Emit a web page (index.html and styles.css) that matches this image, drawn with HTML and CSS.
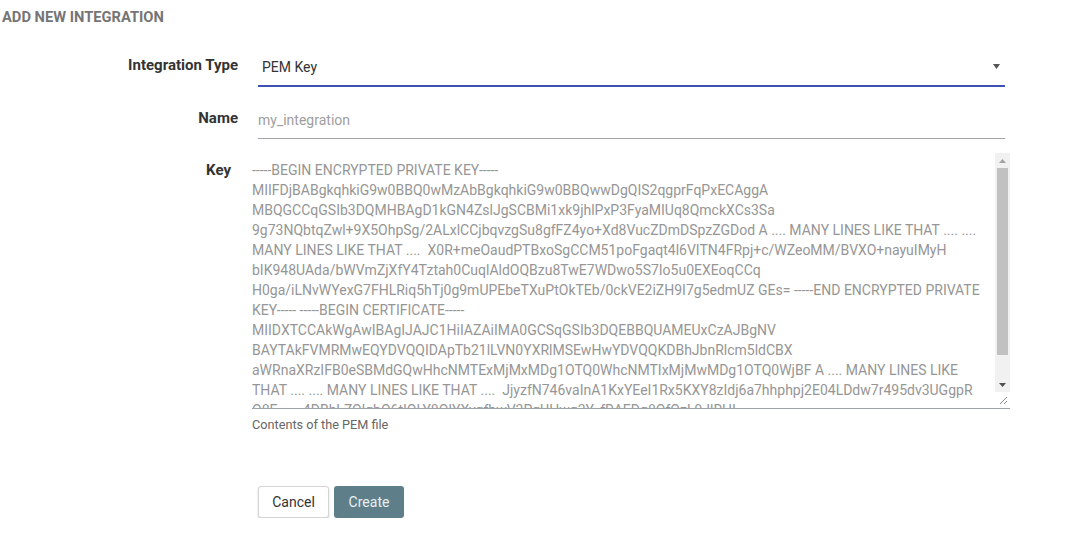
FILE: index.html
```html
<!DOCTYPE html>
<html>
<head>
<meta charset="utf-8">
<link rel="stylesheet" href="styles.css">
</head>
<body>
<div class="page">
  <h2 class="title">ADD NEW INTEGRATION</h2>
  <form class="form">
    <div class="row row-type">
      <label class="label">Integration Type</label>
      <div class="field">
        <div class="select">
          <span class="select-value">PEM Key</span>
          <svg class="caret" width="7" height="5" viewBox="0 0 7 5"><path d="M0 0H7L3.5 5Z" fill="#555"/></svg>
        </div>
      </div>
    </div>
    <div class="row row-name">
      <label class="label">Name</label>
      <div class="field">
        <input class="input" type="text" placeholder="my_integration">
      </div>
    </div>
    <div class="row row-key">
      <label class="label">Key</label>
      <div class="field">
        <div class="textbox">
          <textarea class="textarea">-----BEGIN ENCRYPTED PRIVATE KEY-----
MIIFDjBABgkqhkiG9w0BBQ0wMzAbBgkqhkiG9w0BBQwwDgQIS2qgprFqPxECAggA
MBQGCCqGSIb3DQMHBAgD1kGN4ZslJgSCBMi1xk9jhlPxP3FyaMIUq8QmckXCs3Sa
9g73NQbtqZwl+9X5OhpSg/2ALxlCCjbqvzgSu8gfFZ4yo+Xd8VucZDmDSpzZGDod A .... MANY LINES LIKE THAT .... ....
MANY LINES LIKE THAT ....  X0R+meOaudPTBxoSgCCM51poFgaqt4l6VITN4FRpj+c/WZeoMM/BVXO+nayuIMyH
bIK948UAda/bWVmZjXfY4Tztah0CuqlAldOQBzu8TwE7WDwo5S7Io5u0EXEoqCCq
H0ga/iLNvWYexG7FHLRiq5hTj0g9mUPEbeTXuPtOkTEb/0ckVE2iZH9I7g5edmUZ GEs= -----END ENCRYPTED PRIVATE
KEY----- -----BEGIN CERTIFICATE-----
MIIDXTCCAkWgAwIBAgIJAJC1HiIAZAiIMA0GCSqGSIb3DQEBBQUAMEUxCzAJBgNV
BAYTAkFVMRMwEQYDVQQIDApTb21lLVN0YXRlMSEwHwYDVQQKDBhJbnRlcm5ldCBX
aWRnaXRzIFB0eSBMdGQwHhcNMTExMjMxMDg1OTQ0WhcNMTIxMjMwMDg1OTQ0WjBF A .... MANY LINES LIKE
THAT .... .... MANY LINES LIKE THAT ....  JjyzfN746vaInA1KxYEeI1Rx5KXY8zIdj6a7hhphpj2E04LDdw7r495dv3UGgpR
O8E.....  4DBhLZOlqbO6tIOLY8OIYXyqfbwV3PgUHwq3Y_fRAEDq8OfOzL9JlRHI
-----END CERTIFICATE-----</textarea>
          <div class="scrollbar" aria-hidden="true">
            <div class="sb-btn"><svg width="7" height="4" viewBox="0 0 7 4"><path d="M0 4H7L3.5 0Z" fill="#a3a3a3"/></svg></div>
            <div class="sb-track"><div class="sb-thumb"></div></div>
            <div class="sb-btn"><svg width="7" height="4" viewBox="0 0 7 4"><path d="M0 0H7L3.5 4Z" fill="#505050"/></svg></div>
            <div class="sb-resizer"><svg width="9" height="9" viewBox="0 0 9 9"><path d="M1 8L8 1M5 8L8 5" stroke="#8a8a8a" stroke-width="1"/></svg></div>
          </div>
        </div>
        <div class="help">Contents of the PEM file</div>
      </div>
    </div>
    <div class="row row-actions">
      <div class="label"></div>
      <div class="field actions">
        <button type="button" class="btn btn-cancel">Cancel</button>
        <button type="button" class="btn btn-create">Create</button>
      </div>
    </div>
  </form>
</div>
</body>
</html>
```

FILE: styles.css
```css
* { box-sizing: border-box; }
html, body { margin: 0; padding: 0; background: #fff; }
body {
  font-family: Roboto, "Liberation Sans", Arial, sans-serif;
  font-size: 14px;
  color: #333;
}
.page { width: 1010px; }
.title {
  margin: 0;
  padding: 9px 0 11px 2px;
  font-size: 14.7px;
  line-height: 16px;
  font-weight: 700;
  color: #757575;
}
.row {
  display: grid;
  grid-template-columns: 252px 758px;
}
.label {
  text-align: right;
  padding-right: 14px;
  padding-top: 6px;
  font-weight: 700;
  font-size: 15px;
  line-height: 20px;
  color: #333;
}
.row-type { margin-top: 13px; }
.row-name { margin-top: 15px; }
.row-key { margin-top: 14px; }
.row-key .label { padding-top: 7px; padding-right: 21px; }
.row-actions { margin-top: 53px; }

.select {
  margin: 0 5px 0 6px;
  height: 38px;
  border-bottom: 2px solid #3f51b5;
  display: flex;
  align-items: center;
  justify-content: space-between;
  padding: 0 5px 0 4px;
}
.select-value { font-size: 14px; line-height: 36px; color: #333; }
.caret { display: block; margin-top: -2px; }

.input {
  display: block;
  width: 747px;
  margin: 0 5px 0 6px;
  height: 37px;
  border: none;
  border-bottom: 1px solid #a0a4a8;
  outline: none;
  padding: 0;
  font-family: Roboto, "Liberation Sans", Arial, sans-serif;
  font-size: 14px;
  line-height: 36px;
  color: #333;
  background: transparent;
}
.input::placeholder { color: #9e9e9e; }

.textbox {
  display: flex;
  width: 758px;
  height: 256px;
  border-bottom: 1px solid #a0a4a8;
}
.textarea {
  flex: 1;
  display: block;
  min-width: 0;
  height: 255px;
  margin: 0;
  border: none;
  outline: none;
  padding: 7px 0 0 0;
  font-family: Roboto, "Liberation Sans", Arial, sans-serif;
  font-size: 14px;
  line-height: 20px;
  color: #969696;
  overflow: hidden;
  resize: none;
  background: transparent;
}
.scrollbar {
  width: 15px;
  display: flex;
  flex-direction: column;
  background: #f1f1f1;
}
.sb-btn {
  height: 15px;
  display: flex;
  align-items: center;
  justify-content: center;
}
.sb-btn svg { display: block; }
.sb-track {
  flex: 1;
  padding: 0 2px;
}
.sb-thumb {
  height: 187px;
  background: #c1c1c1;
}
.sb-resizer {
  height: 16px;
  background: #fff;
  display: flex;
  align-items: flex-end;
  justify-content: flex-end;
  padding: 0 2px 3px 0;
}
.sb-resizer svg { display: block; }
.help {
  margin-top: 8px;
  font-size: 12.7px;
  line-height: 16px;
  color: #666;
}
.actions {
  display: flex;
  gap: 5px;
  padding-left: 6px;
}
.btn {
  height: 32px;
  padding: 0 13px;
  font-family: Roboto, "Liberation Sans", Arial, sans-serif;
  font-size: 14px;
  border-radius: 3px;
  cursor: pointer;
}
.btn-cancel {
  width: 71px;
  background: #fff;
  color: #333;
  border: 1px solid #d4d4d4;
  box-shadow: 0 1px 2px rgba(0,0,0,0.2);
}
.btn-create {
  width: 70px;
  background: #5e7f89;
  color: #e9eff1;
  border: none;
}
```
